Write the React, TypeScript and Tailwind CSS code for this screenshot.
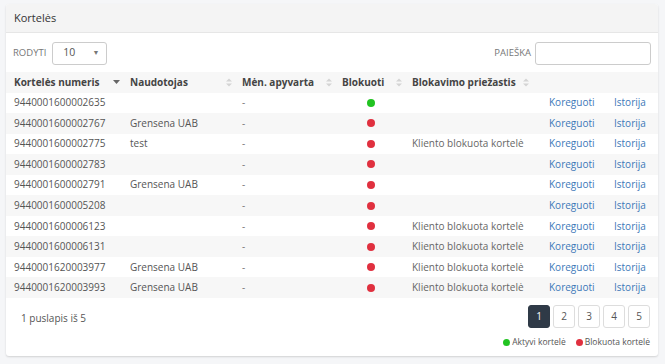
import React from "react";

const rows: [string, string, boolean, string][] = [
  ["9440001600002635", "", true, ""],
  ["9440001600002767", "Grensena UAB", false, ""],
  ["9440001600002775", "test", false, "Kliento blokuota kortelė"],
  ["9440001600002783", "", false, ""],
  ["9440001600002791", "Grensena UAB", false, ""],
  ["9440001600005208", "", false, ""],
  ["9440001600006123", "", false, "Kliento blokuota kortelė"],
  ["9440001600006131", "", false, "Kliento blokuota kortelė"],
  ["9440001620003977", "Grensena UAB", false, "Kliento blokuota kortelė"],
  ["9440001620003993", "Grensena UAB", false, "Kliento blokuota kortelė"],
];

function SortBoth() {
  return (
    <svg width="6" height="9" viewBox="0 0 6 9" className="inline-block">
      <path d="M0 3.5 L3 0.5 L6 3.5 Z" fill="#d4d4d4" />
      <path d="M0 5.5 L3 8.5 L6 5.5 Z" fill="#d4d4d4" />
    </svg>
  );
}

function SortDesc() {
  return (
    <svg width="7" height="4" viewBox="0 0 7 4" className="inline-block">
      <path d="M0 0 L3.5 4 L7 0 Z" fill="#666" />
    </svg>
  );
}

export default function App() {
  return (
    <div
      className="w-[665px] h-[364px] bg-[#f5f6f8] pt-[4px] pl-[6px]"
      style={{ fontFamily: '"Open Sans", sans-serif' }}
    >
      <div className="w-[652px] h-[352px] bg-white rounded-[3px] shadow-[0_1px_2px_rgba(0,0,0,0.15)] flex flex-col text-[#555]">
        <div className="h-[29px] bg-[#f4f4f4] border-b border-[#e6e6e6] flex items-center pl-[8px] text-[11px] text-[#333] rounded-t-[3px]">
          Kortelės
        </div>
        <div className="flex items-center justify-between h-[39px] px-[7px] pt-[1px]">
          <div className="flex items-center gap-[6px]">
            <span className="text-[9.5px] text-[#777]">RODYTI</span>
            <div className="w-[55px] h-[23px] border border-[#ccc] rounded-[3px] flex items-center justify-between pl-[10px] pr-[7px] text-[10.5px] text-[#555]">
              <span>10</span>
              <span className="text-[7px] text-[#777]">▼</span>
            </div>
          </div>
          <div className="flex items-center gap-[4px]">
            <span className="text-[9.5px] text-[#777]">PAIEŠKA</span>
            <div className="w-[116px] h-[23px] border border-[#ccc] rounded-[3px]" />
          </div>
        </div>
        <div className="text-[10px]">
          <div className="flex items-center h-[20.5px] bg-[#f7f7f7] font-bold text-[#444]">
            <div className="w-[124px] pl-[8px] flex items-center justify-between pr-[10px]">
              <span>Kortelės numeris</span>
              <SortDesc />
            </div>
            <div className="w-[112px] pl-[0px] flex items-center justify-between pr-[10px]">
              <span>Naudotojas</span>
              <SortBoth />
            </div>
            <div className="w-[100px] flex items-center justify-between pr-[10px]">
              <span>Mėn. apyvarta</span>
              <SortBoth />
            </div>
            <div className="w-[70px] flex items-center justify-between pr-[10px]">
              <span>Blokuoti</span>
              <SortBoth />
            </div>
            <div className="w-[127px] flex items-center justify-between pr-[10px]">
              <span>Blokavimo priežastis</span>
              <SortBoth />
            </div>
          </div>
          {rows.map((r, i) => (
            <div
              key={r[0]}
              className={`flex items-center h-[20.55px] ${i % 2 === 1 ? "bg-[#f7f7f7]" : "bg-white"}`}
            >
              <div className="w-[124px] pl-[8px]">{r[0]}</div>
              <div className="w-[112px]">{r[1]}</div>
              <div className="w-[100px] text-[#777]">-</div>
              <div className="w-[70px] flex justify-center pr-[12px]">
                <span
                  className={`w-[8px] h-[8px] rounded-full ${r[2] ? "bg-[#21c321]" : "bg-[#e0303f]"}`}
                />
              </div>
              <div className="w-[137px] text-[#666]">{r[3]}</div>
              <div className="w-[65px] text-[#3c78b8]">Koreguoti</div>
              <div className="text-[#3c78b8]">Istorija</div>
            </div>
          ))}
        </div>
        <div className="flex justify-between px-[15px] pt-[7px]">
          <div className="text-[10px] text-[#555] pt-[6px]">1 puslapis iš 5</div>
          <div className="flex flex-col items-end -mr-[7px]">
            <div className="flex gap-[3px]">
              {[1, 2, 3, 4, 5].map((n) => (
                <div
                  key={n}
                  className={`w-[22px] h-[23px] rounded-[3px] flex items-center justify-center text-[10px] ${
                    n === 1
                      ? "bg-[#2f3a47] text-white border border-[#2f3a47]"
                      : "border border-[#ddd] text-[#555] bg-white"
                  }`}
                >
                  {n}
                </div>
              ))}
            </div>
            <div className="flex items-center mt-[8px] text-[8.5px] text-[#555]">
              <span className="w-[7px] h-[7px] rounded-full bg-[#21c321] mr-[2px]" />
              <span>Aktyvi kortelė</span>
              <span className="w-[7px] h-[7px] rounded-full bg-[#e0303f] ml-[10px] mr-[2px]" />
              <span>Blokuota kortelė</span>
            </div>
          </div>
        </div>
      </div>
    </div>
  );
}
